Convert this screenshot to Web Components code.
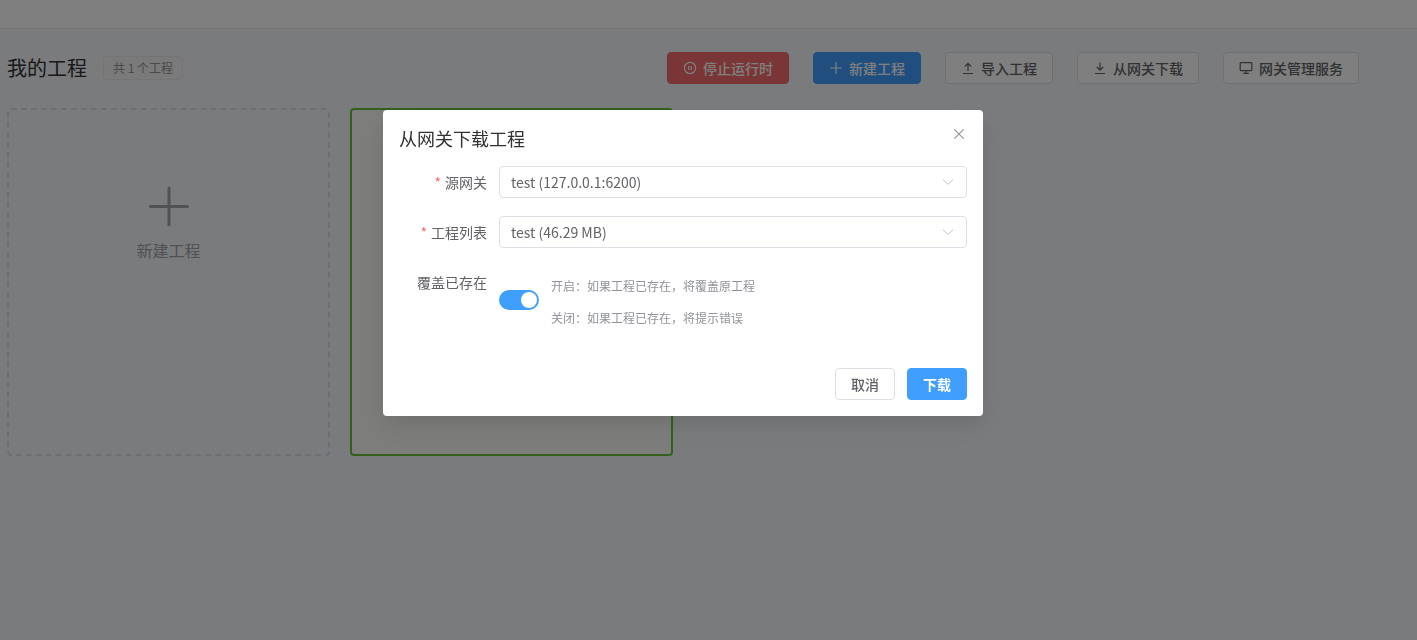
<!DOCTYPE html>
<html lang="zh">
<head>
<meta charset="utf-8">
<title>我的工程</title>
<style>
  html, body { margin: 0; height: 100%; }
  body {
    background: #f5f7fa;
    font-family: "Noto Sans CJK SC", "Noto Sans", sans-serif;
    overflow: hidden;
  }
</style>
</head>
<body>
<project-page>
  <page-toolbar>
    <span slot="title">我的工程</span>
    <span slot="count">共 1 个工程</span>
    <ui-button variant="danger" icon="pause">停止运行时</ui-button>
    <ui-button variant="primary" icon="plus">新建工程</ui-button>
    <ui-button icon="upload">导入工程</ui-button>
    <ui-button icon="download">从网关下载</ui-button>
    <ui-button icon="monitor">网关管理服务</ui-button>
  </page-toolbar>
  <project-grid>
    <add-card>新建工程</add-card>
    <project-card></project-card>
  </project-grid>
</project-page>

<modal-dialog heading="从网关下载工程">
  <form-row label="源网关" required>
    <select-field value="test (127.0.0.1:6200)"></select-field>
  </form-row>
  <form-row label="工程列表" required>
    <select-field value="test (46.29 MB)"></select-field>
  </form-row>
  <overwrite-row label="覆盖已存在">
    <span slot="on">开启：如果工程已存在，将覆盖原工程</span>
    <span slot="off">关闭：如果工程已存在，将提示错误</span>
  </overwrite-row>
  <ui-button slot="footer">取消</ui-button>
  <ui-button slot="footer" variant="solid">下载</ui-button>
</modal-dialog>

<script>
const ICONS = {
  pause: `<circle cx="7" cy="7" r="5.6"/><path d="M5.7 5v4M8.3 5v4"/>`,
  plus: `<path d="M7 1v12M1 7h12"/>`,
  upload: `<path d="M2 12.5h10M7 10V2.6M3.8 5.6 7 2.4l3.2 3.2"/>`,
  download: `<path d="M2 12.5h10M7 1.6V9M3.8 6 7 9.2 10.2 6"/>`,
  monitor: `<rect x="1.2" y="1.6" width="11.6" height="8" rx=".8"/><path d="M4.2 12.4h5.6M7 9.6v2.8"/>`,
};

class ProjectPage extends HTMLElement {
  connectedCallback() {
    const shadow = this.attachShadow({ mode: "open" });
    shadow.innerHTML = `
      <style>
        :host { display: block; }
        header { height: 28px; background: #fff; border-bottom: 1px solid #e6e6e6; }
        main { padding: 0 58px 0 7px; }
      </style>
      <header></header>
      <main><slot></slot></main>
    `;
  }
}

class PageToolbar extends HTMLElement {
  connectedCallback() {
    const shadow = this.attachShadow({ mode: "open" });
    shadow.innerHTML = `
      <style>
        :host { display: flex; align-items: center; height: 32px; padding: 23px 0 24px; }
        .title { font-size: 20px; color: #303133; line-height: 32px; }
        .count {
          margin-left: 16px; height: 22px; line-height: 22px; padding: 0 9px;
          font-size: 12px; color: #909399; background: #f4f4f5;
          border: 1px solid #e9e9eb; border-radius: 4px;
        }
        .actions { margin-left: auto; display: flex; gap: 24px; }
      </style>
      <div class="title"><slot name="title"></slot></div>
      <div class="count"><slot name="count"></slot></div>
      <div class="actions"><slot></slot></div>
    `;
  }
}

class UiButton extends HTMLElement {
  connectedCallback() {
    const shadow = this.attachShadow({ mode: "open" });
    const icon = this.getAttribute("icon");
    shadow.innerHTML = `
      <style>
        :host {
          display: inline-flex; align-items: center; justify-content: center; gap: 6px;
          box-sizing: border-box; height: 32px; padding: 0 15px;
          font-size: 14px; font-weight: 500; color: #606266;
          background: #fff; border: 1px solid #dcdfe6; border-radius: 4px;
        }
        :host([variant="danger"]) { background: #f56c6c; border-color: #f56c6c; color: #fff; }
        :host([variant="primary"]), :host([variant="solid"]) { background: #409eff; border-color: #409eff; color: #fff; }
        :host([variant="solid"]) { font-weight: 700; }
        svg { width: 14px; height: 14px; fill: none; stroke: currentColor; stroke-width: 1.2; }
      </style>
      ${icon ? `<svg viewBox="0 0 14 14">${ICONS[icon]}</svg>` : ""}
      <slot></slot>
    `;
  }
}

class ProjectGrid extends HTMLElement {
  connectedCallback() {
    const shadow = this.attachShadow({ mode: "open" });
    shadow.innerHTML = `
      <style>
        :host { display: grid; grid-template-columns: 323px 323px; column-gap: 20px; height: 348px; }
      </style>
      <slot></slot>
    `;
  }
}

class AddCard extends HTMLElement {
  connectedCallback() {
    const shadow = this.attachShadow({ mode: "open" });
    shadow.innerHTML = `
      <style>
        :host {
          display: flex; flex-direction: column; align-items: center;
          box-sizing: border-box; padding-top: 76px;
          border: 2px dashed #dcdfe6; border-radius: 4px;
          font-size: 16px; line-height: 22px; color: #9fa2a9;
        }
        svg { width: 40px; height: 40px; display: block; margin-bottom: 13px; stroke: #a2a4aa; stroke-width: 3; stroke-linecap: round; fill: none; }
      </style>
      <svg viewBox="0 0 40 40"><path d="M20 2v37M1.5 20.5h37"/></svg>
      <slot></slot>
    `;
  }
}

class ProjectCard extends HTMLElement {
  connectedCallback() {
    this.attachShadow({ mode: "open" }).innerHTML = `
      <style>
        :host {
          display: block; box-sizing: border-box;
          border: 2px solid #67c23a; border-radius: 4px;
          background: #fafcf6;
        }
      </style>
    `;
  }
}

class ModalDialog extends HTMLElement {
  connectedCallback() {
    const shadow = this.attachShadow({ mode: "open" });
    shadow.innerHTML = `
      <style>
        :host {
          position: fixed; inset: 0; display: block;
          background: rgba(0, 0, 0, .5);
        }
        .dialog {
          position: absolute; left: 383px; top: 110px;
          box-sizing: border-box; width: 600px; height: 306px;
          padding: 15px 16px 16px; background: #fff; border-radius: 4px;
          box-shadow: 0 12px 32px 4px rgba(0, 0, 0, .04), 0 8px 20px rgba(0, 0, 0, .08);
          display: flex; flex-direction: column;
        }
        h2 { margin: 0 0 15px; height: 26px; font-size: 18px; font-weight: 400; line-height: 26px; color: #303133; }
        .close { position: absolute; top: 19px; right: 19px; width: 10px; height: 10px; stroke: #909399; stroke-width: 1.1; fill: none; }
        .body { flex: 1; display: flex; flex-direction: column; gap: 18px; }
        .footer { display: flex; justify-content: flex-end; gap: 12px; }
      </style>
      <div class="dialog">
        <h2>${this.getAttribute("heading")}</h2>
        <svg class="close" viewBox="0 0 10 10"><path d="M.3.3l9.4 9.4M9.7.3.3 9.7"/></svg>
        <div class="body"><slot></slot></div>
        <div class="footer"><slot name="footer"></slot></div>
      </div>
    `;
  }
}

class FormRow extends HTMLElement {
  connectedCallback() {
    const shadow = this.attachShadow({ mode: "open" });
    const mark = this.hasAttribute("required") ? `<i>*</i>` : "";
    shadow.innerHTML = `
      <style>
        :host { display: flex; gap: 12px; height: 32px; font-size: 14px; line-height: 32px; color: #606266; }
        label { width: 88px; text-align: right; flex: none; }
        i { font-style: normal; color: #f56c6c; margin-right: 4px; }
        div { flex: 1; }
      </style>
      <label>${mark}${this.getAttribute("label")}</label>
      <div><slot></slot></div>
    `;
  }
}

class SelectField extends HTMLElement {
  connectedCallback() {
    const shadow = this.attachShadow({ mode: "open" });
    shadow.innerHTML = `
      <style>
        :host {
          display: flex; align-items: center; justify-content: space-between;
          box-sizing: border-box; height: 32px; padding: 0 12px 0 11px;
          border: 1px solid #dcdfe6; border-radius: 4px; background: #fff;
          font-size: 14px; color: #606266;
        }
        svg { width: 12px; height: 12px; stroke: #c0c4cc; stroke-width: 1; fill: none; }
      </style>
      <span>${this.getAttribute("value")}</span>
      <svg viewBox="0 0 12 12"><path d="M1 3.8 6 8.3l5-4.5"/></svg>
    `;
  }
}

class OverwriteRow extends HTMLElement {
  connectedCallback() {
    const shadow = this.attachShadow({ mode: "open" });
    shadow.innerHTML = `
      <style>
        :host { display: flex; gap: 12px; margin-top: 5px; font-size: 14px; color: #606266; }
        label { width: 88px; text-align: right; flex: none; line-height: 22px; }
        .control { display: flex; align-items: flex-start; gap: 12px; }
        toggle-switch { margin-top: 19px; }
        .help { display: flex; flex-direction: column; gap: 14px; margin-top: 6px; font-size: 12px; line-height: 18px; color: #909399; }
      </style>
      <label>${this.getAttribute("label")}</label>
      <div class="control">
        <toggle-switch></toggle-switch>
        <div class="help">
          <slot name="on"></slot>
          <slot name="off"></slot>
        </div>
      </div>
    `;
  }
}

class ToggleSwitch extends HTMLElement {
  connectedCallback() {
    this.attachShadow({ mode: "open" }).innerHTML = `
      <style>
        :host {
          display: block; position: relative; width: 40px; height: 20px;
          border-radius: 10px; background: #409eff;
        }
        :host::after {
          content: ""; position: absolute; top: 2px; right: 2px;
          width: 16px; height: 16px; border-radius: 50%; background: #fff;
        }
      </style>
    `;
  }
}

customElements.define("project-page", ProjectPage);
customElements.define("page-toolbar", PageToolbar);
customElements.define("ui-button", UiButton);
customElements.define("project-grid", ProjectGrid);
customElements.define("add-card", AddCard);
customElements.define("project-card", ProjectCard);
customElements.define("modal-dialog", ModalDialog);
customElements.define("form-row", FormRow);
customElements.define("select-field", SelectField);
customElements.define("overwrite-row", OverwriteRow);
customElements.define("toggle-switch", ToggleSwitch);
</script>
</body>
</html>
